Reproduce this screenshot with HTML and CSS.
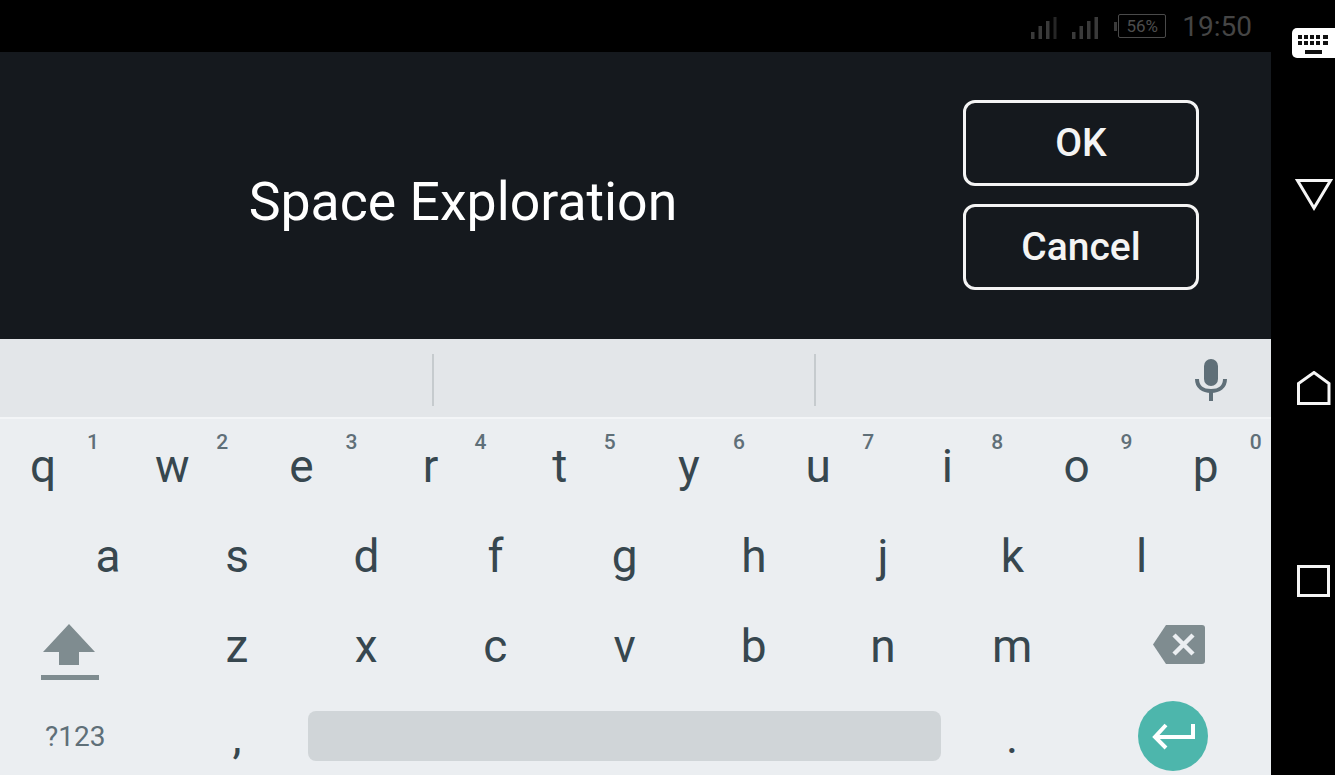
FILE: index.html
```html
<!DOCTYPE html>
<html lang="en">
<head>
  <meta charset="UTF-8" />
  <title>Space Exploration</title>
  <link rel="stylesheet" href="styles.css">
</head>
<body>
  <div class="screen">
    <div class="status-bar">
      <svg class="signal" width="26" height="22" viewBox="0 0 26 22">
        <rect x="0" y="15" width="3.500" height="7" fill="#3a3a3a"/>
        <rect x="7.500" y="9" width="3.500" height="13" fill="#3a3a3a"/>
        <rect x="15" y="4" width="3.500" height="18" fill="#3a3a3a"/>
        <rect x="22.500" y="0" width="3" height="22" fill="#262626"/>
      </svg>
      <svg class="signal" width="26" height="22" viewBox="0 0 26 22">
        <rect x="0" y="15" width="3.500" height="7" fill="#3a3a3a"/>
        <rect x="7.500" y="9" width="3.500" height="13" fill="#3a3a3a"/>
        <rect x="15" y="4" width="3.500" height="18" fill="#3a3a3a"/>
        <rect x="22.500" y="0" width="3.500" height="22" fill="#3a3a3a"/>
      </svg>
      <span class="battery-nub"></span>
      <span class="battery">56%</span>
      <span class="clock">19:50</span>
    </div>

    <div class="dialog">
      <div class="title">Space Exploration</div>
      <div class="actions">
        <button class="btn">OK</button>
        <button class="btn">Cancel</button>
      </div>
    </div>

    <div class="suggestions">
      <div class="slot"></div>
      <div class="slot"></div>
      <div class="slot slot-mic">
        <svg width="32" height="42" viewBox="0 0 32 42">
          <rect x="9" y="0" width="14" height="27" rx="7" fill="#5f6f78"/>
          <path d="M2 20c0 8 6 12 14 12s14-4 14-12" fill="none" stroke="#5f6f78" stroke-width="4"/>
          <rect x="14" y="31" width="4" height="11" fill="#5f6f78"/>
        </svg>
      </div>
    </div>

    <div class="keyboard">
      <div class="row row-top">
        <div class="key"><span class="letter">q</span><sup class="digit">1</sup></div>
        <div class="key"><span class="letter">w</span><sup class="digit">2</sup></div>
        <div class="key"><span class="letter">e</span><sup class="digit">3</sup></div>
        <div class="key"><span class="letter">r</span><sup class="digit">4</sup></div>
        <div class="key"><span class="letter">t</span><sup class="digit">5</sup></div>
        <div class="key"><span class="letter">y</span><sup class="digit">6</sup></div>
        <div class="key"><span class="letter">u</span><sup class="digit">7</sup></div>
        <div class="key"><span class="letter">i</span><sup class="digit">8</sup></div>
        <div class="key"><span class="letter">o</span><sup class="digit">9</sup></div>
        <div class="key"><span class="letter">p</span><sup class="digit">0</sup></div>
      </div>
      <div class="row row-home">
        <div class="cell">a</div>
        <div class="cell">s</div>
        <div class="cell">d</div>
        <div class="cell">f</div>
        <div class="cell">g</div>
        <div class="cell">h</div>
        <div class="cell">j</div>
        <div class="cell">k</div>
        <div class="cell">l</div>
      </div>
      <div class="row row-wide">
        <div class="cell cell-shift">
          <svg width="58" height="56" viewBox="0 0 58 56">
            <path d="M28 0 54 28H38V41H18V28H2Z" fill="#7f8c90"/>
            <rect x="0" y="51" width="58" height="5" fill="#7f8c90"/>
          </svg>
        </div>
        <div class="cell">z</div>
        <div class="cell">x</div>
        <div class="cell">c</div>
        <div class="cell">v</div>
        <div class="cell">b</div>
        <div class="cell">n</div>
        <div class="cell">m</div>
        <div class="cell cell-back">
          <svg width="52" height="39" viewBox="0 0 52 39">
            <path d="M13 0H49a3 3 0 0 1 3 3V36a3 3 0 0 1-3 3H13L0 19.500Z" fill="#7f8c90"/>
            <path d="M21 10 40 29M40 10 21 29" stroke="#ebeef1" stroke-width="4.500"/>
          </svg>
        </div>
      </div>
      <div class="row row-wide row-bottom">
        <div class="cell cell-sym">?123</div>
        <div class="cell">,</div>
        <div class="cell cell-space"><div class="spacebar"></div></div>
        <div class="cell">.</div>
        <div class="cell cell-enter">
          <div class="enter">
            <svg width="44" height="28" viewBox="0 0 44 28">
              <path d="M42 2V15H5M15 3 4 15 15 26" fill="none" stroke="#fff" stroke-width="4"/>
            </svg>
          </div>
        </div>
      </div>
    </div>
  </div>

  <div class="nav">
    <svg class="nav-kbd" width="43" height="30" viewBox="0 0 43 30">
      <rect width="50" height="30" rx="5" fill="#fff"/>
      <g fill="#111">
        <path d="M6 7h4v4H6zM12 7h4v4h-4zM18 7h4v4h-4zM24 7h4v4h-4zM31 7h5v4h-5z"/>
        <path d="M6 13h4v4H6zM12 13h4v4h-4zM18 13h4v4h-4zM24 13h4v4h-4zM31 13h5v4h-5z"/>
        <rect x="13" y="22" width="17" height="4"/>
      </g>
    </svg>
    <svg class="nav-back" width="38" height="32" viewBox="0 0 38 32">
      <path d="M2.500 1.500H35.500L19 29Z" fill="none" stroke="#f5f5f5" stroke-width="3"/>
    </svg>
    <svg class="nav-home" width="34" height="34" viewBox="0 0 34 34">
      <path d="M1.500 32.500V12.500L17 1.500 32 12.500V32.500Z" fill="none" stroke="#f5f5f5" stroke-width="3"/>
    </svg>
    <svg class="nav-recent" width="33" height="32" viewBox="0 0 33 32">
      <rect x="1.500" y="1.500" width="30" height="29" fill="none" stroke="#f5f5f5" stroke-width="3"/>
    </svg>
  </div>
</body>
</html>
```
FILE: styles.css
```css
* {
  margin: 0;
  padding: 0;
  box-sizing: border-box;
}

body {
  font-family: Roboto, sans-serif;
  background-color: #000;
  display: flex;
  width: 1335px;
  height: 775px;
  overflow: hidden;
}

.screen {
  width: 1271px;
  height: 775px;
  display: flex;
  flex-direction: column;
  overflow: hidden;
}

.status-bar {
  height: 52px;
  flex-shrink: 0;
  display: flex;
  align-items: center;
  justify-content: flex-end;
  padding-right: 19px;
  background-color: #000;
}

.signal {
  margin-right: 16px;
  margin-top: 4px;
}

.signal:first-child {
  margin-right: 15px;
}

.battery-nub {
  width: 3px;
  height: 9px;
  background-color: #3a3a3a;
}

.battery {
  width: 48px;
  height: 24px;
  margin-left: 1px;
  border: 1px solid #4a4a4a;
  border-radius: 2px;
  color: #4d4d4d;
  font-size: 17px;
  line-height: 22px;
  text-align: center;
}

.clock {
  margin-left: 16px;
  color: #454545;
  font-size: 28px;
}

.dialog {
  height: 287px;
  flex-shrink: 0;
  display: flex;
  align-items: center;
  padding: 0 72px 2px 0;
  background-color: #15191e;
}

.title {
  flex: 1;
  padding-top: 14px;
  color: #fff;
  font-size: 53.600px;
  text-align: center;
}

.actions {
  width: 236px;
  margin-left: 37px;
  display: flex;
  flex-direction: column;
  gap: 18px;
}

.btn {
  height: 86px;
  border: 3px solid #f4f4f4;
  border-radius: 12px;
  background-color: transparent;
  color: #f4f4f4;
  font-family: Roboto, sans-serif;
  font-size: 39px;
  font-weight: 500;
}

.suggestions {
  height: 78px;
  flex-shrink: 0;
  display: grid;
  grid-template-columns: 434px 382px 1fr;
  padding: 15px 0 11px;
  background-color: #e3e6e9;
}

.slot {
  border-right: 2px solid #c6cbce;
}

.slot-mic {
  border-right: none;
  display: flex;
  justify-content: flex-end;
  align-items: center;
  padding-right: 44px;
}

.keyboard {
  flex: 1;
  min-height: 0;
  padding-top: 2px;
  border-top: 2px solid #f3f5f7;
  background-color: #ebeef1;
  color: #37474f;
  font-size: 46px;
}

.row {
  height: 90.200px;
  display: grid;
  grid-auto-columns: 129.200px;
  grid-auto-flow: column;
}

.row-home {
  padding-left: 43.400px;
}

.row-wide {
  grid-template-columns: 172.400px repeat(7, 129.200px) 1fr;
}

.key {
  display: grid;
  grid-template-columns: 87px auto;
  justify-content: start;
}

.letter {
  display: flex;
  align-items: center;
  justify-content: center;
  padding-right: 1px;
}

.digit {
  padding-top: 9px;
  color: #5f6f78;
  font-size: 21px;
  font-weight: 500;
  line-height: 25px;
}

.cell {
  display: flex;
  align-items: center;
  justify-content: center;
}

.cell-shift {
  justify-content: flex-start;
  padding: 12px 0 0 41px;
}

.cell-back {
  justify-content: flex-start;
  padding: 0 0 4px 76.500px;
}

.cell-sym {
  justify-content: flex-start;
  padding-left: 45px;
  color: #5f6f78;
  font-size: 28px;
}

.row-bottom .cell-space {
  grid-column: span 5;
  padding: 0 7px 2px 6px;
}

.spacebar {
  width: 100%;
  height: 50px;
  border-radius: 8px;
  background-color: #d0d5d8;
}

.cell-enter {
  justify-content: flex-start;
  padding: 0 0 2px 61px;
}

.enter {
  width: 70px;
  height: 70px;
  flex-shrink: 0;
  display: flex;
  align-items: center;
  justify-content: center;
  border-radius: 50%;
  background-color: #4db6ac;
}

.nav {
  width: 64px;
  height: 775px;
  display: flex;
  flex-direction: column;
  background-color: #000;
}

.nav-kbd {
  margin: 28px 0 0 21px;
}

.nav-back {
  margin: 121px 0 0 24px;
}

.nav-home {
  margin: 160px 0 0 26px;
}

.nav-recent {
  margin: 160px 0 0 26px;
}
```
